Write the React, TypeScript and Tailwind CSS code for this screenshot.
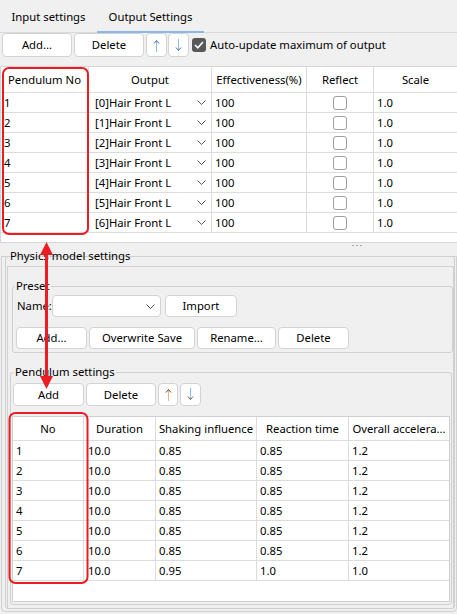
import React from "react";

const btn =
  "h-full bg-white border border-[#d3d3d3] rounded-[4px] flex items-center justify-center shrink-0";

function Chevron() {
  return (
    <svg width="9" height="5" viewBox="0 0 9 5" className="shrink-0">
      <polyline points="0.5,0.5 4.5,4.5 8.5,0.5" fill="none" stroke="#555" strokeWidth="1" />
    </svg>
  );
}

function Arrow({ down, stem, head }: { down?: boolean; stem: string; head: string }) {
  return (
    <svg width="7" height="13" viewBox="0 0 7 13" className={down ? "rotate-180" : ""}>
      <line x1="3.5" y1="1.5" x2="3.5" y2="13" stroke={stem} strokeWidth="1" />
      <polyline points="1,4.5 3.5,1.5 6,4.5" fill="none" stroke={head} strokeWidth="1" />
    </svg>
  );
}

const outputRows = [0, 1, 2, 3, 4, 5, 6];

const pendRows = [
  ["1", "10.0", "0.85", "0.85", "1.2"],
  ["2", "10.0", "0.85", "0.85", "1.2"],
  ["3", "10.0", "0.85", "0.85", "1.2"],
  ["4", "10.0", "0.85", "0.85", "1.2"],
  ["5", "10.0", "0.85", "0.85", "1.2"],
  ["6", "10.0", "0.85", "0.85", "1.2"],
  ["7", "10.0", "0.95", "1.0", "1.0"],
];

export default function App() {
  return (
    <div className="relative w-[457px] h-[614px] overflow-hidden bg-[#f0f0f0] text-[11.3px] leading-none text-black font-['Noto_Sans',sans-serif]">
      {/* tabs */}
      <div className="flex h-[33px] border-b border-[#d9d9d9]">
        <div className="w-[97px] flex items-center justify-center pt-[2px]">Input settings</div>
        <div className="w-[107px] h-[33px] -mb-px flex items-center justify-center pt-[2px] border-b-2 border-[#8cb8e6]">
          Output Settings
        </div>
      </div>

      {/* toolbar */}
      <div className="flex items-center h-[24px] pl-[2px]">
        <button className={`${btn} w-[70px]`}>Add...</button>
        <button className={`${btn} w-[70px] ml-[2px]`}>Delete</button>
        <button className={`${btn} w-[21px] ml-[2px]`}>
          <Arrow stem="#8dbde8" head="#3f6f9f" />
        </button>
        <button className={`${btn} w-[21px] ml-[1px]`}>
          <Arrow down stem="#8dbde8" head="#3f6f9f" />
        </button>
        <span className="ml-[3px] w-[14px] h-[14px] rounded-[3px] bg-[#585858] flex items-center justify-center">
          <svg width="10" height="8" viewBox="0 0 10 8">
            <polyline points="1,4 3.8,6.8 9,1" fill="none" stroke="#fff" strokeWidth="1.6" />
          </svg>
        </span>
        <span className="ml-[4px]">Auto-update maximum of output</span>
      </div>

      {/* output table */}
      <div className="mt-[9px] h-[177px] bg-white border-t border-b border-l border-[#d6d6d6] flex flex-col">
        <div className="flex h-[26px] border-b border-[#dcdcdc] shrink-0">
          <div className="w-[88px] border-r border-[#dcdcdc] flex items-center justify-center">Pendulum No</div>
          <div className="w-[123px] border-r border-[#dcdcdc] flex items-center justify-center">Output</div>
          <div className="w-[95px] border-r border-[#dcdcdc] flex items-center justify-center">Effectiveness(%)</div>
          <div className="w-[67px] border-r border-[#dcdcdc] flex items-center justify-center">Reflect</div>
          <div className="flex-1 flex items-center justify-center">Scale</div>
        </div>
        {outputRows.map((i) => (
          <div key={i} className="flex h-[20px] border-b border-[#dcdcdc] shrink-0">
            <div className="w-[88px] border-r border-[#dcdcdc] flex items-center pl-[3px]">{i + 1}</div>
            <div className="w-[123px] border-r border-[#dcdcdc] flex items-center pl-[6px] pr-[5px] justify-between">
              <span>[{i}]Hair Front L</span>
              <Chevron />
            </div>
            <div className="w-[95px] border-r border-[#dcdcdc] flex items-center pl-[3px]">100</div>
            <div className="w-[67px] border-r border-[#dcdcdc] flex items-center justify-center">
              <span className="w-[14px] h-[14px] rounded-[3px] border border-[#a0a0a0] bg-white" />
            </div>
            <div className="flex-1 flex items-center pl-[3px]">1.0</div>
          </div>
        ))}
        <div className="flex-1" />
      </div>

      {/* splitter */}
      <div className="h-[13px] flex items-start pt-[2px] pl-[352px] gap-[2px]">
        <span className="w-[2px] h-[1px] bg-[#a8a8a8]" />
        <span className="w-[2px] h-[1px] bg-[#a8a8a8]" />
        <span className="w-[2px] h-[1px] bg-[#a8a8a8]" />
      </div>

      {/* bottom frame */}
      <div className="ml-[1px] w-[456px] h-[356px] border border-[#d0d0d0] rounded-b-[4px] pl-[3px] pr-[1px]">
        <fieldset className="-mt-[9px] h-[361px] border border-[#d0d0d0] rounded-[3px] flex flex-col">
          <legend className="ml-[2px] px-[2px] leading-[16px]">Physics model settings</legend>
          <div className="mt-[2px] ml-[1px] flex-1 border-t border-l border-r border-[#d0d0d0] flex flex-col">
            {/* preset */}
            <fieldset className="mt-[11px] ml-[4px] border border-[#d0d0d0] rounded-[3px] pb-[3px]">
              <legend className="ml-[2px] px-[1px] leading-[16px]">Preset</legend>
              <div className="mt-[1px] flex items-center h-[22px] pl-[4px]">
                <span className="w-[35px] whitespace-nowrap">Name:</span>
                <div className="w-[109px] h-full bg-white border border-[#d3d3d3] rounded-[4px] flex items-center justify-end pr-[5px]">
                  <Chevron />
                </div>
                <button className={`${btn} w-[72px] ml-[4px]`}>Import</button>
              </div>
              <div className="mt-[10px] flex h-[22px] pl-[3px] gap-[2px]">
                <button className={`${btn} w-[71px]`}>Add...</button>
                <button className={`${btn} w-[106px]`}>Overwrite Save</button>
                <button className={`${btn} w-[79px]`}>Rename...</button>
                <button className={`${btn} w-[71px]`}>Delete</button>
              </div>
            </fieldset>

            {/* pendulum settings */}
            <fieldset className="mt-[11px] ml-[2px] mr-[1px] border border-[#d0d0d0] rounded-[3px] pb-[2px]">
              <legend className="ml-[3px] px-[1px] leading-[16px]">Pendulum settings</legend>
              <div className="mt-[3px] flex h-[23px] pl-[2px] gap-[2px]">
                <button className={`${btn} w-[71px]`}>Add</button>
                <button className={`${btn} w-[70px]`}>Delete</button>
                <button className={`${btn} w-[20px]`}>
                  <Arrow stem="#f2b47a" head="#6a4a2a" />
                </button>
                <button className={`${btn} w-[21px]`}>
                  <Arrow down stem="#8dbde8" head="#8a5a2a" />
                </button>
              </div>
              <div className="mt-[10px] ml-[1px] mr-[1px] h-[186px] bg-white border border-[#d0d0d0] flex flex-col">
                <div className="flex h-[24px] border-b border-[#dcdcdc] shrink-0">
                  <div className="w-[71px] border-r border-[#dcdcdc] flex items-center justify-center">No</div>
                  <div className="w-[72px] border-r border-[#dcdcdc] flex items-center justify-center">Duration</div>
                  <div className="w-[101px] border-r border-[#dcdcdc] flex items-center justify-center whitespace-nowrap">Shaking influence</div>
                  <div className="w-[92px] border-r border-[#dcdcdc] flex items-center justify-center">Reaction time</div>
                  <div className="flex-1 flex items-center justify-center whitespace-nowrap overflow-hidden">Overall accelera...</div>
                </div>
                {pendRows.map((r) => (
                  <div key={r[0]} className="flex h-[20px] border-b border-[#dcdcdc] shrink-0">
                    <div className="w-[71px] border-r border-[#dcdcdc] flex items-center pl-[3px]">{r[0]}</div>
                    <div className="w-[72px] border-r border-[#dcdcdc] flex items-center pl-[4px]">{r[1]}</div>
                    <div className="w-[101px] border-r border-[#dcdcdc] flex items-center pl-[3px]">{r[2]}</div>
                    <div className="w-[92px] border-r border-[#dcdcdc] flex items-center pl-[3px]">{r[3]}</div>
                    <div className="flex-1 flex items-center pl-[3px]">{r[4]}</div>
                  </div>
                ))}
                <div className="flex-1" />
              </div>
            </fieldset>
          </div>
        </fieldset>
      </div>

      {/* red annotations */}
      <svg className="absolute left-0 top-0 pointer-events-none" width="457" height="614" viewBox="0 0 457 614">
        <rect x="3" y="68" width="85" height="166" rx="6" fill="none" stroke="#ec1c24" strokeWidth="2" />
        <rect x="9.5" y="413" width="78" height="170" rx="6" fill="none" stroke="#ec1c24" strokeWidth="2" />
        <line x1="46.5" y1="252" x2="46.5" y2="378" stroke="#ec1c24" strokeWidth="3" />
        <polygon points="46.5,242 40,255 53,255" fill="#ec1c24" />
        <polygon points="46.5,389 40,376 53,376" fill="#ec1c24" />
      </svg>
    </div>
  );
}
